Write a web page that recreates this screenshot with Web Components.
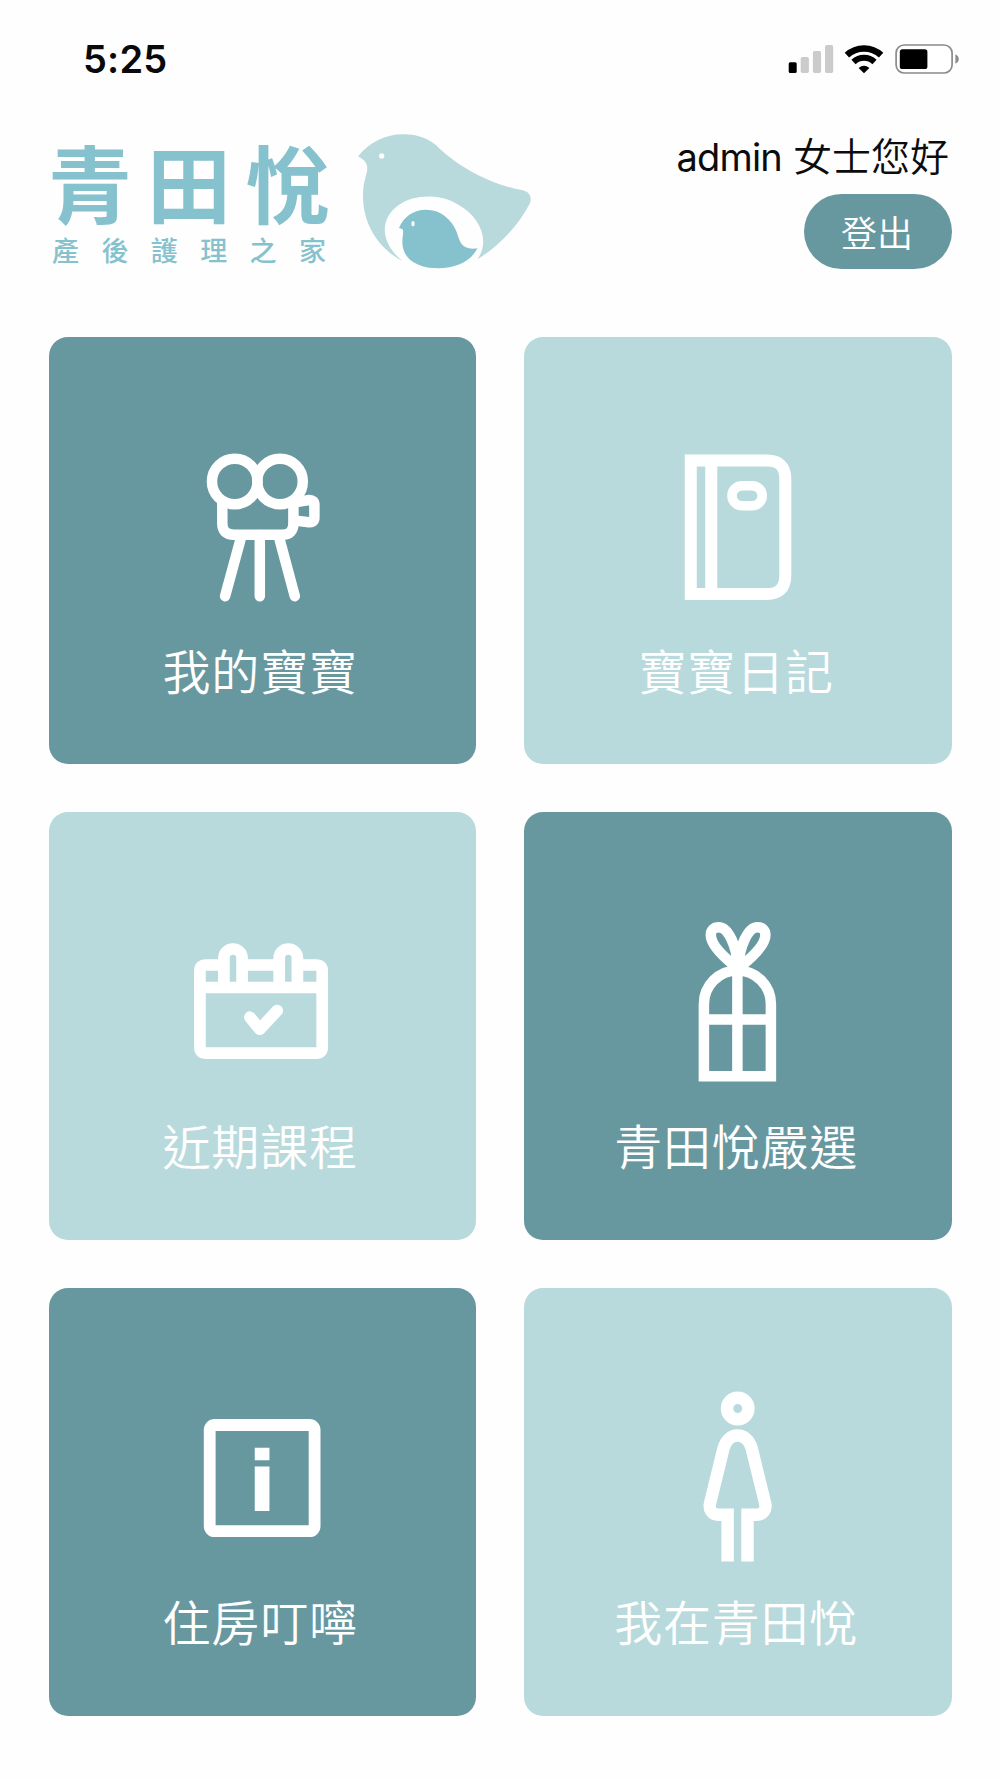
<!DOCTYPE html>
<html lang="zh-Hant">
<head>
<meta charset="utf-8">
<title>青田悅</title>
<style>
  html, body { margin: 0; padding: 0; }
  body {
    width: 1000px;
    min-height: 1778px;
    background: #fefefe;
    font-family: Inter, "Noto Sans CJK TC", sans-serif;
  }
</style>
</head>
<body>
<home-screen>
  <status-bar slot="status" time="5:25"></status-bar>
  <app-header slot="header" logout="登出"><span>admin</span> 女士您好</app-header>
  <menu-tile icon="camera" tone="dark">我的寶寶</menu-tile>
  <menu-tile icon="diary">寶寶日記</menu-tile>
  <menu-tile icon="calendar">近期課程</menu-tile>
  <menu-tile icon="gift" tone="dark">青田悅嚴選</menu-tile>
  <menu-tile icon="info" tone="dark">住房叮嚀</menu-tile>
  <menu-tile icon="woman">我在青田悅</menu-tile>
</home-screen>

<script>
// line icons, all on a 180x180 box
const ICONS = {
  camera: `<g stroke-width="10.5" stroke-linecap="round">
    <circle cx="62.75" cy="44.5" r="22.8"/>
    <circle cx="108" cy="44.5" r="22.8"/>
    <path stroke-linecap="butt" d="M50.3 62V86.5Q50.3 97.7 62 97.7H110Q121.4 97.7 121.4 86.5V62"/>
    <path stroke-linecap="butt" d="M121.4 65.6L137 63Q142.4 62.8 142.4 68V80.5Q142.4 85.8 137 85.2L121.4 83.4"/>
    <path d="M68.4 102.8L53.1 159.2M87.8 98V159.2M107.7 102.8L122.8 159.2"/></g>`,
  diary: `<path stroke-width="12" d="M42.75 23.5H119Q137.3 23.5 137.3 42V138.5Q137.3 157 119 157H42.75ZM63.25 23.5V157"/>
    <rect stroke-width="9.6" x="84" y="48.7" width="30.2" height="20" rx="10"/>`,
  calendar: `<g stroke-width="11.7">
    <path d="M51.9 53H34Q27.9 53 27.9 59V135.2Q27.9 141.2 34 141.2H144.2Q150.2 141.2 150.2 135.2V59Q150.2 53 144.2 53H125.6M70 53H107.2M27.9 75.5H150.2"/>
    <path d="M51.9 75.5V46.1A9.1 9.1 0 0 1 70.1 46.1V75.5M107.2 75.5V46.1A9.1 9.1 0 0 1 125.4 46.1V75.5"/>
    <path stroke-linecap="round" stroke-linejoin="round" d="M77.9 105.2L87.8 117.2L105.2 98.6"/></g>`,
  gift: `<g stroke-width="10.5">
    <path d="M55.9 164.3V92A33.5 33.5 0 0 1 122.9 92V164.3ZM89.4 52V164.3M55.9 107.5H122.9"/>
    <path d="M87 54C72 42 62.8 31 62.8 23C62.8 18 66 15.2 70.8 15.2C80 15.2 89 34 89.6 54"/>
    <path d="M93.2 54C108.2 42 117.4 31 117.4 23C117.4 18 114.2 15.2 109.4 15.2C100.2 15.2 91.2 34 90.6 54"/></g>`,
  info: `<rect stroke-width="11.8" x="37.7" y="37" width="104.9" height="106.2" rx="5"/>
    <path stroke-width="14.7" d="M90.1 59.8V72.2M90.1 78.5V122.9"/>`,
  woman: `<circle stroke-width="12.5" cx="89.7" cy="20.5" r="10.7"/>
    <path stroke-width="12.4" d="M79.6 173.5V126.8H70.5C64 126.8 60.6 121.5 62 115.5L75.6 60C78 52 83 47.5 89.6 47.5C96.2 47.5 101.2 52 103.6 60L117.2 115.5C118.6 121.5 115.2 126.8 108.7 126.8H99.5V173.5"/>`
};

class HomeScreen extends HTMLElement {
  constructor() {
    super();
    this.attachShadow({mode: 'open'}).innerHTML = `<style>
      :host { display: flex; flex-direction: column; width: 1000px; height: 1778px; }
      .grid {
        display: grid;
        grid-template-columns: repeat(2, 427.3px);
        grid-auto-rows: 427.3px;
        gap: 48.7px;
        padding: 0 48.5px;
      }
    </style>
    <slot name="status"></slot>
    <slot name="header"></slot>
    <div class="grid"><slot></slot></div>`;
  }
}

class StatusBar extends HTMLElement {
  connectedCallback() {
    this.attachShadow({mode: 'open'}).innerHTML = `<style>
      :host {
        display: flex;
        justify-content: space-between;
        align-items: center;
        box-sizing: border-box;
        height: 116px;
        padding: 1px 40px 0 83px;
      }
      .time { font-size: 38px; line-height: 46px; font-weight: 570; letter-spacing: .2px; color: #0a0a0a; }
      svg { display: block; }
    </style>
    <span class="time">${this.getAttribute('time')}</span>
    <svg width="172" height="32" viewBox="0 0 172 32">
      <rect x=".7" y="19.3" width="8" height="10.8" rx="1.5"/>
      <g fill="#cbcbcb">
        <rect x="12.7" y="14" width="8.2" height="16.1" rx="1.8"/>
        <rect x="24.9" y="8" width="8.2" height="22.1" rx="1.8"/>
        <rect x="37" y="2" width="8.2" height="28.1" rx="1.8"/>
      </g>
      <g fill="none" stroke="#000">
        <path stroke-width="6.4" d="M58.9 12.2A25 25 0 0 1 93.1 12.2"/>
        <path stroke-width="6" d="M65.5 19A15.2 15.2 0 0 1 86.5 19"/>
      </g>
      <path d="M76 30.2L70.6 24.9Q76 20.4 81.4 24.9Z"/>
      <rect x="108.1" y="2" width="56" height="28" rx="8" fill="#fff" stroke="#8b8b8b" stroke-width="1.7"/>
      <rect x="111.8" y="6.2" width="27.6" height="19.8" rx="2.6"/>
      <path d="M167.4 11.2Q170.8 13 170.8 16Q170.8 19 167.4 20.8Z" fill="#8b8b8b"/>
    </svg>`;
  }
}

class BrandLogo extends HTMLElement {
  constructor() {
    super();
    this.attachShadow({mode: 'open'}).innerHTML = `<style>
      :host {
        display: flex;
        gap: 10px;
        color: #86c2ce;
        font-family: "Noto Sans CJK TC", sans-serif;
        font-weight: 700;
      }
      .words { display: flex; flex-direction: column; width: 300px; white-space: nowrap; }
      .name { font-size: 84px; line-height: 96px; letter-spacing: 15px; }
      .sub {
        font-size: 27px;
        line-height: 32px;
        font-weight: 500;
        letter-spacing: 22.4px;
        padding: 5px 0 0 4px;
      }
      svg { display: block; }
    </style>
    <div class="words">
      <span class="name">青田悅</span>
      <span class="sub">產後護理之家</span>
    </div>
    <svg width="174" height="136" viewBox="54 38 522 408">
      <path fill="#b8dadc" d="M54 108C90 65 135 42 190 42C235 42 270 55 300 86C350 132 440 190 548 210C568 214 578 232 569 250C535 315 480 375 412 417C450 365 425 290 350 250C300 222 225 220 175 255C120 295 118 365 187 422C100 375 62 290 70 205C72 180 80 165 82 145C82 128 72 118 54 108Z"/>
      <circle cx="125" cy="107" r="8" fill="#fefefe"/>
      <path fill="#86c2ce" d="M177 323C190 290 220 268 258 268C300 268 335 295 350 335C360 365 365 390 412 384C395 420 350 444 295 444C230 444 187 415 187 365C187 345 192 335 188 327Z"/>
      <ellipse cx="219" cy="310" rx="5" ry="8" fill="#fefefe"/>
    </svg>`;
  }
}

class AppHeader extends HTMLElement {
  connectedCallback() {
    this.attachShadow({mode: 'open'}).innerHTML = `<style>
      :host {
        display: flex;
        justify-content: space-between;
        box-sizing: border-box;
        height: 220.5px;
        padding: 17px 48px 0 48px;
      }
      .user { display: flex; flex-direction: column; align-items: flex-end; gap: 13px; }
      .hello {
        font-size: 39px;
        line-height: 48px;
        font-weight: 350;
        color: #0c0c0c;
        padding-right: 3px;
        white-space: nowrap;
      }
      ::slotted(span) { font-size: 38px; font-weight: 400; letter-spacing: -.8px; }
      button {
        width: 148px;
        height: 75px;
        padding: 0 2px 0 0;
        border: 0;
        border-radius: 37.5px;
        background: #68989f;
        color: #fff;
        font: 350 36px/75px "Noto Sans CJK TC", sans-serif;
      }
    </style>
    <brand-logo></brand-logo>
    <div class="user">
      <span class="hello"><slot></slot></span>
      <button>${this.getAttribute('logout')}</button>
    </div>`;
  }
}

class MenuTile extends HTMLElement {
  connectedCallback() {
    this.attachShadow({mode: 'open'}).innerHTML = `<style>
      :host {
        display: flex;
        flex-direction: column;
        align-items: center;
        box-sizing: border-box;
        padding-top: 100px;
        border-radius: 19px;
        background: #b8dadc;
        color: #fff;
      }
      :host([tone=dark]) { background: #68989f; }
      svg { display: block; fill: none; stroke: #fff; }
      .label {
        margin: 22px 4px 0 0;
        font: 350 48px/60px "Noto Sans CJK TC", sans-serif;
        letter-spacing: .8px;
        white-space: nowrap;
      }
    </style>
    <svg width="180" height="180" viewBox="0 0 180 180">${ICONS[this.getAttribute('icon')]}</svg>
    <span class="label"><slot></slot></span>`;
  }
}

customElements.define('home-screen', HomeScreen);
customElements.define('status-bar', StatusBar);
customElements.define('brand-logo', BrandLogo);
customElements.define('app-header', AppHeader);
customElements.define('menu-tile', MenuTile);
</script>
</body>
</html>
